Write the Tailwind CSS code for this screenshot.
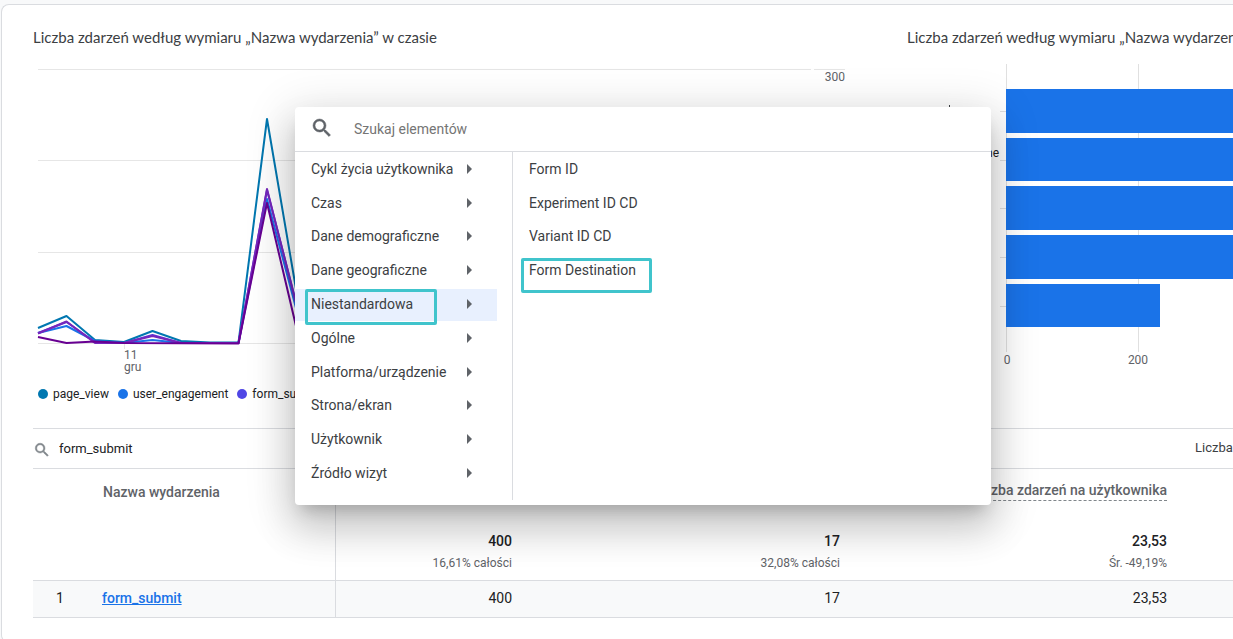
<!DOCTYPE html>
<html lang="pl">
<head>
<meta charset="utf-8">
<title>Zdarzenia</title>
<script src="https://cdn.jsdelivr.net/npm/@tailwindcss/browser@4"></script>
</head>
<body class="relative h-screen overflow-hidden bg-[#f8f9fa] pt-1 pl-px font-['Roboto',sans-serif] text-sm text-[#202124]">

<main class="rounded-l-lg border border-r-0 border-[#dadce0] bg-white pb-6 pl-[31px]">
  <div class="flex h-[423px]">
    <section class="min-w-0 flex-1 pt-6">
      <h2 class="h-4 font-['Lato',sans-serif] text-[15px] leading-4 font-normal text-[#3c4043]">Liczba zdarzeń według wymiaru „Nazwa wydarzenia” w czasie</h2>
      <svg class="mt-[15px] ml-1 block h-[316px] w-[calc(100%-4px)]" role="img" aria-label="Wykres liniowy">
        <g stroke="#e6e6e6">
          <path d="M1 9.500H774M777 9.500H808M1 100.500H808M1 192.500H808M1 283.500H808M87.500 284V289"/>
        </g>
        <g fill="none" stroke-width="2" stroke-linejoin="round">
          <polyline stroke="#0077b0" points="1,268 29.500,256 58,280 87,282 115.500,271 144,281 173,282.500 201.500,282.500 230,59 259,229"/>
          <polyline stroke="#1a73e8" points="1,273 29.500,266 58,281 87,283 115.500,280 144,283 173,283 201.500,283 230,139 259,248"/>
          <polyline stroke="#5b37d8" points="1,273 29.500,262 58,282 87,283 115.500,275 144,283 173,283 201.500,283 230,130 259,242"/>
          <polyline stroke="#7627bb" points="1,273.500 29.500,261.500 58,283 87,283 115.500,276 144,283 173,283 201.500,283 230,129 259,243"/>
          <polyline stroke="#680092" points="1,277 29.500,283 58,281.500 87,283 201.500,283.500 230,143 259,266"/>
        </g>
        <g font-size="12" fill="#5f6368">
          <text x="808" y="21" text-anchor="end">300</text>
          <text x="87" y="299">11</text>
          <text x="87" y="311">gru</text>
        </g>
      </svg>
      <ul class="flex h-[26px] items-end gap-[9px] pl-[5px] text-xs leading-4">
        <li class="flex items-center gap-[5px]"><span class="size-[10px] rounded-full bg-[#0077b0]"></span>page_view</li>
        <li class="flex items-center gap-[5px]"><span class="size-[10px] rounded-full bg-[#1a73e8]"></span>user_engagement</li>
        <li class="flex items-center gap-[5px]"><span class="size-[10px] rounded-full bg-[#4f46e5]"></span>form_submit</li>
      </ul>
    </section>
    <section class="ml-[62px] w-[326px] shrink-0 overflow-hidden pt-6">
      <h2 class="h-4 font-['Lato',sans-serif] text-[15px] leading-4 font-normal whitespace-nowrap text-[#3c4043]">Liczba zdarzeń według wymiaru „Nazwa wydarzenia”</h2>
      <svg class="mt-[15px] block h-[320px] w-full" role="img" aria-label="Wykres słupkowy">
        <path stroke="#e0e0e0" d="M99.500 4V292M231.500 4V292M93 51.500H99M93 100.500H99M93 148.500H99M93 197.500H99M93 246.500H99"/>
        <g fill="#1a73e8">
          <rect x="99" y="29" width="100%" height="44"/>
          <rect x="99" y="78" width="100%" height="43"/>
          <rect x="99" y="126" width="100%" height="44"/>
          <rect x="99" y="175" width="100%" height="44"/>
          <rect x="99" y="224" width="154" height="43"/>
        </g>
        <rect x="42" y="45" width="1" height="2" fill="#3c4043"/>
        <g font-size="12" fill="#5f6368">
          <text x="92" y="97" text-anchor="end" fill="#202124">ne</text>
          <text x="100" y="304" text-anchor="middle">0</text>
          <text x="231" y="304" text-anchor="middle">200</text>
        </g>
      </svg>
    </section>
  </div>

  <div class="flex h-[41px] items-center overflow-hidden border-y border-[#dadce0] text-[13px]">
    <label for="filter" class="shrink-0"><svg class="mt-0.5 size-[18px] fill-[#80868b] stroke-[#80868b] stroke-[0.6]" viewBox="0 0 24 24" role="img" aria-label="Szukaj"><path d="M15.500 14h-.79l-.28-.27A6.470 6.470 0 0 0 16 9.500 6.500 6.500 0 1 0 9.500 16c1.610 0 3.090-.59 4.230-1.570l.27.280v.79l5 4.990L20.490 19l-4.990-5zm-6 0C7.010 14 5 11.990 5 9.500S7.010 5 9.500 5 14 7.010 14 9.500 11.990 14 9.500 14z"/></svg></label>
    <input id="filter" value="form_submit" class="ml-2 min-w-0 flex-1 pt-0.5 outline-none">
    <span class="w-[38px] shrink-0 whitespace-nowrap text-[#3c4043]">Liczba wierszy</span>
  </div>

  <table class="w-full table-fixed border-collapse">
    <colgroup><col class="w-[54px]"><col><col class="w-[192px]"><col class="w-[328px]"><col class="w-[327px]"><col class="w-[51px]"></colgroup>
    <thead class="text-[#5f6368]">
      <tr class="h-[58px] align-top">
        <td></td>
        <th scope="col" class="border-r border-[#dadce0] pt-[13px] pl-4 text-left font-medium">Nazwa wydarzenia</th>
        <td></td><td></td>
        <th scope="col" class="pt-[11px] pr-[15px] text-right font-medium whitespace-nowrap"><span class="inline-block border-b border-dashed border-[#80868b]">Liczba zdarzeń na użytkownika</span></th>
        <td></td>
      </tr>
    </thead>
    <tbody class="text-right">
      <tr class="h-[53px] align-top text-xs text-[#5f6368]">
        <td></td><td class="border-r border-[#dadce0]"></td>
        <td class="pt-1 pr-[15px]"><p class="text-sm leading-5 font-medium text-[#202124]">400</p><p class="pt-1 leading-4">16,61% całości</p></td>
        <td class="pt-1 pr-[15px]"><p class="text-sm leading-5 font-medium text-[#202124]">17</p><p class="pt-1 leading-4">32,08% całości</p></td>
        <td class="pt-1 pr-[15px]"><p class="text-sm leading-5 font-medium text-[#202124]">23,53</p><p class="pt-1 leading-4">Śr. -49,19%</p></td>
        <td></td>
      </tr>
      <tr class="h-[37px] border-y border-[#dadce0] bg-[#f8f9fa]">
        <td class="pb-0.5 text-center">1</td>
        <td class="border-r border-[#dadce0] pb-0.5 pl-[15px] text-left"><a href="#" class="font-medium text-[#1a73e8] underline">form_submit</a></td>
        <td class="pr-[15px] pb-0.5">400</td><td class="pr-[15px] pb-0.5">17</td><td class="pr-[15px] pb-0.5">23,53</td><td></td>
      </tr>
    </tbody>
  </table>
</main>

<div role="dialog" aria-label="Wybór wymiaru" class="absolute top-[107px] left-[295px] w-[696px] rounded bg-white text-[#3c4043] shadow-[0_11px_15px_-7px_rgba(0,0,0,0.2),0_24px_38px_3px_rgba(0,0,0,0.14),0_9px_46px_8px_rgba(0,0,0,0.12)]">
  <div class="flex h-[45px] items-center border-b border-[#dadce0] pl-[15px]">
    <label for="search"><svg class="mb-0.5 size-6 fill-[#5f6368] stroke-[#5f6368] stroke-[0.5]" viewBox="0 0 24 24" role="img" aria-label="Szukaj"><path d="M15.500 14h-.79l-.28-.27A6.470 6.470 0 0 0 16 9.500 6.500 6.500 0 1 0 9.500 16c1.610 0 3.090-.59 4.230-1.570l.27.280v.79l5 4.990L20.490 19l-4.990-5zm-6 0C7.010 14 5 11.990 5 9.500S7.010 5 9.500 5 14 7.010 14 9.500 11.990 14 9.500 14z"/></svg></label>
    <input id="search" placeholder="Szukaj elementów" class="ml-5 min-w-0 flex-1 outline-none placeholder:text-[#757575]">
  </div>
  <div class="flex h-[353px] pb-[5px]">
    <div class="w-[218px] border-r border-[#dadce0]">
      <ul class="grid h-[338px] w-[202px] grid-rows-10 items-end">
        <li><button class="flex h-8 w-full items-center justify-between pr-6 pb-0.5 pl-4">Cykl życia użytkownika<svg class="h-[10px] w-[7px] fill-[#5f6368]" viewBox="0 0 7 10"><path d="M1 0l5 5-5 5z"/></svg></button></li>
        <li><button class="flex h-8 w-full items-center justify-between pr-6 pb-0.5 pl-4">Czas<svg class="h-[10px] w-[7px] fill-[#5f6368]" viewBox="0 0 7 10"><path d="M1 0l5 5-5 5z"/></svg></button></li>
        <li><button class="flex h-8 w-full items-center justify-between pr-6 pb-0.5 pl-4">Dane demograficzne<svg class="h-[10px] w-[7px] fill-[#5f6368]" viewBox="0 0 7 10"><path d="M1 0l5 5-5 5z"/></svg></button></li>
        <li><button class="flex h-8 w-full items-center justify-between pr-6 pb-0.5 pl-4">Dane geograficzne<svg class="h-[10px] w-[7px] fill-[#5f6368]" viewBox="0 0 7 10"><path d="M1 0l5 5-5 5z"/></svg></button></li>
        <li class="relative"><button class="flex h-8 w-full items-center justify-between bg-[#e8f0fe] pr-6 pb-0.5 pl-4">Niestandardowa<svg class="h-[10px] w-[7px] fill-[#5f6368]" viewBox="0 0 7 10"><path d="M1 0l5 5-5 5z"/></svg></button><span class="pointer-events-none absolute top-0 left-[10px] h-9 w-[132px] rounded-xs border-3 border-[#40c4cc]"></span></li>
        <li><button class="flex h-8 w-full items-center justify-between pr-6 pb-0.5 pl-4">Ogólne<svg class="h-[10px] w-[7px] fill-[#5f6368]" viewBox="0 0 7 10"><path d="M1 0l5 5-5 5z"/></svg></button></li>
        <li><button class="flex h-8 w-full items-center justify-between pr-6 pb-0.5 pl-4">Platforma/urządzenie<svg class="h-[10px] w-[7px] fill-[#5f6368]" viewBox="0 0 7 10"><path d="M1 0l5 5-5 5z"/></svg></button></li>
        <li><button class="flex h-8 w-full items-center justify-between pr-6 pb-0.5 pl-4">Strona/ekran<svg class="h-[10px] w-[7px] fill-[#5f6368]" viewBox="0 0 7 10"><path d="M1 0l5 5-5 5z"/></svg></button></li>
        <li><button class="flex h-8 w-full items-center justify-between pr-6 pb-0.5 pl-4">Użytkownik<svg class="h-[10px] w-[7px] fill-[#5f6368]" viewBox="0 0 7 10"><path d="M1 0l5 5-5 5z"/></svg></button></li>
        <li><button class="flex h-8 w-full items-center justify-between pr-6 pb-0.5 pl-4">Źródło wizyt<svg class="h-[10px] w-[7px] fill-[#5f6368]" viewBox="0 0 7 10"><path d="M1 0l5 5-5 5z"/></svg></button></li>
      </ul>
    </div>
    <ul class="grid h-[135px] flex-1 grid-rows-4 items-end">
      <li><button class="h-8 w-full pb-0.5 pl-4 text-left">Form ID</button></li>
      <li><button class="h-8 w-full pb-0.5 pl-4 text-left">Experiment ID CD</button></li>
      <li><button class="h-8 w-full pb-0.5 pl-4 text-left">Variant ID CD</button></li>
      <li class="relative"><button class="h-8 w-full pb-0.5 pl-4 text-left">Form Destination</button><span class="pointer-events-none absolute top-[3px] left-2 h-[35px] w-[131px] rounded-xs border-3 border-[#40c4cc]"></span></li>
    </ul>
  </div>
</div>
</body>
</html>
